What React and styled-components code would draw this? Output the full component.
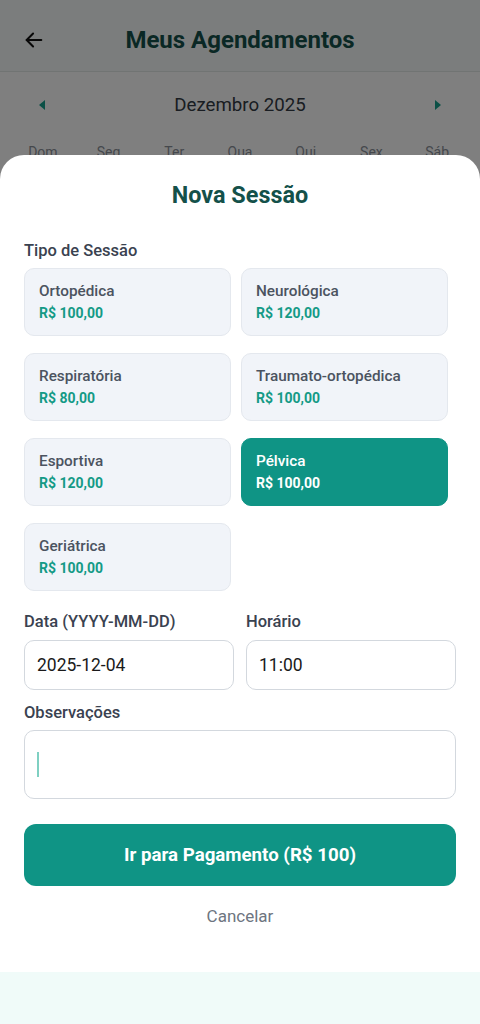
import React from 'react'
import styled, { createGlobalStyle } from 'styled-components'

const GlobalStyle = createGlobalStyle`
  body {
    margin: 0;
    font-family: Roboto, "Liberation Sans", sans-serif;
  }
`

const sessions = [
  { name: 'Ortopédica', price: 'R$ 100,00' },
  { name: 'Neurológica', price: 'R$ 120,00' },
  { name: 'Respiratória', price: 'R$ 80,00' },
  { name: 'Traumato-ortopédica', price: 'R$ 100,00' },
  { name: 'Esportiva', price: 'R$ 120,00' },
  { name: 'Pélvica', price: 'R$ 100,00', selected: true },
  { name: 'Geriátrica', price: 'R$ 100,00' },
]

const weekDays = ['Dom', 'Seg', 'Ter', 'Qua', 'Qui', 'Sex', 'Sáb']

const Screen = styled.div`
  position: relative;
  width: 480px;
  height: 1024px;
  overflow: hidden;
  background: #ffffff;
`

const Header = styled.div`
  height: 72px;
  display: grid;
  grid-template-columns: 44px 1fr 44px;
  align-items: center;
  padding: 8px 22px 0;
  box-sizing: border-box;
  background: #f7fbfa;
  border-bottom: 1px solid #e3e8e7;
`

const BackButton = styled.div`
  width: 24px;
  height: 24px;
  display: flex;
  align-items: center;
  justify-content: center;
  color: #111;
`

const HeaderTitle = styled.h1`
  margin: 0;
  text-align: center;
  font-size: 24px;
  font-weight: 700;
  color: #14514a;
`

const MonthNav = styled.div`
  display: flex;
  align-items: center;
  justify-content: space-between;
  padding: 22px 38px 0;
  height: 22px;
`

const MonthLabel = styled.span`
  font-size: 18.7px;
  color: #333a44;
`

const WeekRow = styled.div`
  display: grid;
  grid-template-columns: repeat(7, 1fr);
  padding: 0 10px;
  margin-top: 28px;
  font-size: 14px;
  color: #8a9099;
  text-align: center;
`

const Backdrop = styled.div`
  position: absolute;
  inset: 0;
  background: rgba(0, 0, 0, 0.5);
`

const Modal = styled.div`
  position: absolute;
  top: 155px;
  left: 0;
  right: 0;
  bottom: 0;
  display: flex;
  flex-direction: column;
`

const Sheet = styled.div`
  flex: 1;
  background: #ffffff;
  border-radius: 24px 24px 0 0;
  padding: 27px 24px 0;
`

const SafeBand = styled.div`
  height: 52px;
  background: #f0fbf9;
`

const SheetTitle = styled.h2`
  margin: 0;
  text-align: center;
  font-size: 23.4px;
  line-height: 27px;
  font-weight: 700;
  color: #14514a;
`

const Label = styled.div`
  font-size: 16.5px;
  line-height: 20px;
  font-weight: 500;
  color: #3a4250;
  margin-top: ${p => p.top}px;
  margin-bottom: ${p => p.bottom}px;
`

const CardGrid = styled.div`
  display: grid;
  grid-template-columns: 207px 207px;
  column-gap: 10px;
  row-gap: 17px;
`

const Card = styled.div`
  height: 68px;
  box-sizing: border-box;
  padding: 0 14px;
  display: flex;
  flex-direction: column;
  justify-content: center;
  gap: 3px;
  border-radius: 10px;
  background: ${p => (p.selected ? '#0f9485' : '#f1f4f9')};
  border: 1px solid ${p => (p.selected ? '#0f9485' : '#e4e8ee')};
`

const CardName = styled.span`
  font-size: 15.3px;
  line-height: 19px;
  font-weight: 500;
  color: ${p => (p.selected ? '#ffffff' : '#4b5360')};
`

const CardPrice = styled.span`
  font-size: 14px;
  line-height: 18px;
  font-weight: 700;
  color: ${p => (p.selected ? '#ffffff' : '#149a86')};
`

const FieldRow = styled.div`
  display: grid;
  grid-template-columns: 210px 210px;
  column-gap: 12px;
  margin-top: 21px;
`

const Field = styled.div`
  display: flex;
  flex-direction: column;
`

const Input = styled.div`
  height: 50px;
  box-sizing: border-box;
  border: 1px solid #d3d8de;
  border-radius: 10px;
  display: flex;
  align-items: center;
  padding: 0 12px;
  font-size: 17.5px;
  color: #1a1a1a;
`

const TextArea = styled.div`
  height: 69px;
  box-sizing: border-box;
  border: 1px solid #d3d8de;
  border-radius: 10px;
  padding: 21px 12px;
`

const Caret = styled.div`
  width: 2px;
  height: 25px;
  background: #7fd0c2;
`

const PayButton = styled.button`
  width: 100%;
  height: 62px;
  margin-top: 25px;
  border: none;
  border-radius: 12px;
  background: #0f9485;
  color: #ffffff;
  font-family: inherit;
  font-size: 18.7px;
  font-weight: 700;
`

const CancelLink = styled.div`
  margin-top: 20px;
  text-align: center;
  font-size: 17px;
  line-height: 20px;
  color: #6e7580;
`

const Triangle = ({ dir }) => (
  <svg width="8" height="12" viewBox="0 0 8 12">
    <path d={dir === 'left' ? 'M7 1 L1 6 L7 11 Z' : 'M1 1 L7 6 L1 11 Z'} fill="#16a08c" />
  </svg>
)

const App = () => {
  return (
    <Screen>
      <GlobalStyle />
      <Header>
        <BackButton>
          <svg width="22" height="22" viewBox="0 0 24 24" fill="none" stroke="#111" strokeWidth="2.2" strokeLinecap="round" strokeLinejoin="round">
            <path d="M20 12H4" />
            <path d="M11 5l-7 7 7 7" />
          </svg>
        </BackButton>
        <HeaderTitle>Meus Agendamentos</HeaderTitle>
        <span />
      </Header>
      <MonthNav>
        <Triangle dir="left" />
        <MonthLabel>Dezembro 2025</MonthLabel>
        <Triangle dir="right" />
      </MonthNav>
      <WeekRow>
        {weekDays.map(d => (
          <span key={d}>{d}</span>
        ))}
      </WeekRow>

      <Backdrop />
      <Modal>
        <Sheet>
          <SheetTitle>Nova Sessão</SheetTitle>
          <Label top={32} bottom={7}>Tipo de Sessão</Label>
          <CardGrid>
            {sessions.map(s => (
              <Card key={s.name} selected={s.selected}>
                <CardName selected={s.selected}>{s.name}</CardName>
                <CardPrice selected={s.selected}>{s.price}</CardPrice>
              </Card>
            ))}
          </CardGrid>
          <FieldRow>
            <Field>
              <Label top={0} bottom={8}>Data (YYYY-MM-DD)</Label>
              <Input>2025-12-04</Input>
            </Field>
            <Field>
              <Label top={0} bottom={8}>Horário</Label>
              <Input>11:00</Input>
            </Field>
          </FieldRow>
          <Label top={13} bottom={7}>Observações</Label>
          <TextArea>
            <Caret />
          </TextArea>
          <PayButton>Ir para Pagamento (R$ 100)</PayButton>
          <CancelLink>Cancelar</CancelLink>
        </Sheet>
        <SafeBand />
      </Modal>
    </Screen>
  )
}

export default App
